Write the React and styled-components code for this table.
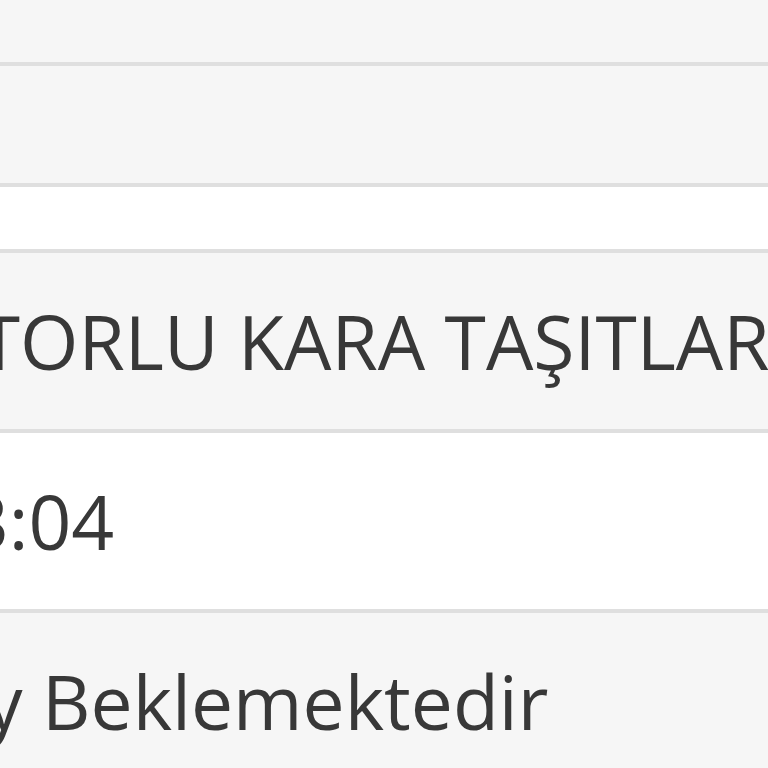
import React from "react";
import styled, { createGlobalStyle } from "styled-components";

const Global = createGlobalStyle`
  html, body { margin: 0; padding: 0; background: #ffffff; }
  body { overflow: hidden; }
`;

const Table = styled.div`
  width: 768px;
  height: 768px;
  overflow: hidden;
  display: flex;
  flex-direction: column;
  font-family: "Open Sans", "Noto Sans", sans-serif;
  font-size: 75px;
  color: #383838;
`;

const Row = styled.div`
  flex: none;
  height: ${(p) => p.$h}px;
  background: ${(p) => (p.$striped ? "#f6f6f6" : "#ffffff")};
  border-top: ${(p) => (p.$first ? "none" : "4px solid #dfdfdf")};
  display: flex;
  align-items: center;
  overflow: hidden;
  white-space: nowrap;
`;

const Cell = styled.span`
  display: block;
  margin-left: ${(p) => p.$shift}px;
  line-height: 1;
`;

const rows = [
  { h: 62, striped: true, first: true },
  { h: 117, striped: true },
  { h: 62, striped: false },
  { h: 176, striped: true, text: "MOTORLU KARA TAŞITLARI", shift: -147 },
  { h: 176, striped: false, text: "13:04", shift: -77 },
  { h: 176, striped: true, text: "Onay Beklemektedir", shift: -161 },
];

export default function App() {
  return (
    <>
      <Global />
      <Table>
        {rows.map((r, i) => (
          <Row key={i} $h={r.h} $striped={r.striped} $first={r.first}>
            {r.text && <Cell $shift={r.shift}>{r.text}</Cell>}
          </Row>
        ))}
      </Table>
    </>
  );
}
